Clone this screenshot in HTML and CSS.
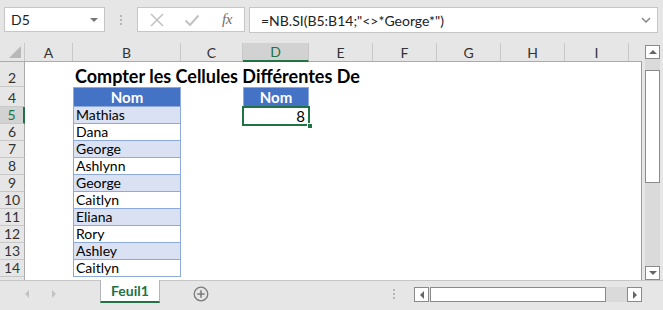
FILE: index.html
```html
<!DOCTYPE html>
<html lang="fr">
<head>
<meta charset="utf-8">
<title>Excel</title>
<link rel="stylesheet" href="styles.css">
</head>
<body>
<div class="app">
  <div class="fbar">
    <div class="namebox"><span>D5</span><i class="caret"></i></div>
    <div class="vdots"><b></b><b></b><b></b></div>
    <div class="fxbox">
      <svg class="ico" width="16" height="16" viewBox="0 0 16 16"><path d="M2 2L14 14M14 2L2 14" stroke="#c3c3c3" stroke-width="1.6" fill="none"/></svg>
      <svg class="ico" width="16" height="16" viewBox="0 0 16 16"><path d="M1.5 8.5L6 13L14.5 3.5" stroke="#c3c3c3" stroke-width="2" fill="none"/></svg>
      <span class="fx">fx</span>
    </div>
    <div class="formula"><span>=NB.SI(B5:B14;"&lt;&gt;*George*")</span>
      <svg class="chev" width="10" height="6" viewBox="0 0 10 6"><path d="M1 1L5 5L9 1" stroke="#888" stroke-width="1.5" fill="none"/></svg>
    </div>
  </div>

  <div class="main">
    <div class="grid">
      <div class="colhdr">
        <div class="corner"><i class="tri"></i></div>
        <div class="ch">A</div><div class="ch">B</div><div class="ch">C</div><div class="ch sel">D</div>
        <div class="ch">E</div><div class="ch">F</div><div class="ch">G</div><div class="ch">H</div><div class="ch">I</div><div class="ch last"></div>
      </div>
      <div class="rows">
        <div class="row r2"><div class="rh">2</div><div class="c"></div><div class="c title">Compter les Cellules Différentes De</div><div class="c"></div><div class="c"></div><div class="c"></div></div>
        <div class="row r4"><div class="rh">4</div><div class="c"></div><div class="c th">Nom</div><div class="c"></div><div class="c th">Nom</div><div class="c"></div></div>
        <div class="row"><div class="rh sel">5</div><div class="c"></div><div class="c td band">Mathias</div><div class="c"></div><div class="c num active">8<i class="handle"></i></div><div class="c"></div></div>
        <div class="row"><div class="rh">6</div><div class="c"></div><div class="c td">Dana</div><div class="c"></div><div class="c"></div><div class="c"></div></div>
        <div class="row"><div class="rh">7</div><div class="c"></div><div class="c td band">George</div><div class="c"></div><div class="c"></div><div class="c"></div></div>
        <div class="row"><div class="rh">8</div><div class="c"></div><div class="c td">Ashlynn</div><div class="c"></div><div class="c"></div><div class="c"></div></div>
        <div class="row"><div class="rh">9</div><div class="c"></div><div class="c td band">George</div><div class="c"></div><div class="c"></div><div class="c"></div></div>
        <div class="row"><div class="rh">10</div><div class="c"></div><div class="c td">Caitlyn</div><div class="c"></div><div class="c"></div><div class="c"></div></div>
        <div class="row"><div class="rh">11</div><div class="c"></div><div class="c td band">Eliana</div><div class="c"></div><div class="c"></div><div class="c"></div></div>
        <div class="row"><div class="rh">12</div><div class="c"></div><div class="c td">Rory</div><div class="c"></div><div class="c"></div><div class="c"></div></div>
        <div class="row"><div class="rh">13</div><div class="c"></div><div class="c td band">Ashley</div><div class="c"></div><div class="c"></div><div class="c"></div></div>
        <div class="row"><div class="rh">14</div><div class="c"></div><div class="c td">Caitlyn</div><div class="c"></div><div class="c"></div><div class="c"></div></div>
        <div class="row rpart"><div class="rh"></div><div class="c"></div><div class="c"></div><div class="c"></div><div class="c"></div><div class="c"></div></div>
      </div>
    </div>
    <div class="vscroll">
      <div class="sbtn"><i class="up"></i></div>
      <div class="vtrack"><div class="vthumb"></div></div>
      <div class="sbtn"><i class="down"></i></div>
    </div>
  </div>

  <div class="tabbar">
    <div class="nav"><i class="navl"></i><i class="navr"></i></div>
    <div class="tab">Feuil1</div>
    <div class="addarea">
      <svg width="16" height="16" viewBox="0 0 16 16"><circle cx="8" cy="8" r="6.8" stroke="#7a7a7a" stroke-width="1.3" fill="none"/><path d="M8 4.3V11.7M4.3 8H11.7" stroke="#7a7a7a" stroke-width="1.5"/></svg>
    </div>
    <div class="spacer"></div>
    <div class="hdots"><b></b><b></b><b></b></div>
    <div class="hscroll">
      <div class="hbtn"><i class="left"></i></div>
      <div class="hthumb"></div>
      <div class="htrack"></div>
      <div class="hbtn"><i class="right"></i></div>
    </div>
  </div>
</div>
</body>
</html>
```

FILE: styles.css
```css
* { box-sizing: border-box; }
html, body { margin: 0; padding: 0; }
body { background: #e6e6e6; }
.app {
  width: 663px; height: 310px; overflow: hidden;
  background: #e6e6e6;
  font-family: Lato, "Liberation Sans", sans-serif;
  color: #000;
}

/* formula bar */
.fbar { display: flex; height: 33px; padding: 7px 5px 0 4px; }
.namebox {
  width: 101px; height: 25px; background: #fff; border: 1px solid #c6c6c6;
  display: flex; align-items: center; justify-content: space-between;
  padding: 0 6px 0 6px; font-size: 14px; color: #222;
}
.caret { width: 0; height: 0; border-left: 4px solid transparent; border-right: 4px solid transparent; border-top: 4px solid #777; }
.vdots { width: 32px; display: flex; flex-direction: column; align-items: center; justify-content: center; gap: 2px; height: 25px; }
.vdots b, .hdots b { display: block; width: 2px; height: 2px; background: #b5b5b5; }
.fxbox {
  width: 108px; height: 25px; background: #fff; border: 1px solid #c6c6c6;
  display: flex; align-items: center; padding-left: 11px;
}
.fxbox .ico { margin-right: 19px; }
.fx { font-family: "Liberation Serif", serif; font-style: italic; font-size: 15px; color: #6e6e6e; letter-spacing: -0.5px; margin-left: 3px; }
.formula {
  margin-left: 4px; width: 409px; height: 26px; background: #fff; border: 1px solid #c6c6c6;
  display: flex; align-items: center; justify-content: space-between;
  padding: 0 6px 0 11px; font-size: 14px; color: #222;
}

/* grid */
.main { display: flex; margin-top: 10px; height: 237px; }
.grid { width: 642px; display: flex; flex-direction: column; }
.colhdr {
  display: grid; height: 19px;
  grid-template-columns: 25px 48px 108px 62px 66px 64px 64px 64px 64px 64px 13px;
  border-bottom: 1px solid #ababab;
}
.corner { position: relative; border-right: 1px solid #c8c8c8; }
.tri {
  position: absolute; right: 3px; bottom: 3px; width: 0; height: 0;
  border-left: 12px solid transparent; border-bottom: 12px solid #b8b8b8;
}
.ch {
  display: flex; align-items: center; justify-content: center;
  font-size: 14px; color: #333; border-right: 1px solid #c8c8c8;
}
.ch.last { border-right: none; }
.ch.sel { background: #d2d2d2; color: #217346; border-bottom: 2px solid #217346; margin-bottom: -1px; }

.rows { flex: 1; background: #fff; border-right: 1px solid #9c9c9c; }
.row { display: grid; grid-template-columns: 25px 48px 108px 62px 66px 1fr; height: 17px; }
.row.r2 { height: 25px; }
.row.r4 { height: 20px; }
.row.rpart { height: 3px; }
.rh {
  background: #e6e6e6; border-right: 1px solid #ababab; border-bottom: 1px solid #c8c8c8;
  display: flex; align-items: flex-end; justify-content: center;
  font-size: 14px; color: #333; line-height: 16px;
}
.rh.sel { background: #d2d2d2; color: #217346; border-right: 2px solid #217346; }
.rpart .rh { border-bottom: none; }
.c { display: flex; align-items: flex-end; font-size: 14px; line-height: 16px; white-space: nowrap; padding: 0 2px; }
.title { font-weight: bold; font-size: 18px; line-height: 22px; overflow: visible; position: relative; z-index: 1; }
.th {
  background: #4472c4; color: #fff; font-weight: bold; justify-content: center;
  border: 1px solid #8ea9db; align-items: center; font-size: 15px;
}
.td { border-left: 1px solid #8ea9db; border-right: 1px solid #8ea9db; border-bottom: 1px solid #8ea9db; }
.band { background: #d9e1f2; }
.num { justify-content: flex-end; padding-right: 4px; font-size: 15px; }
.active { position: relative; }
.active::after {
  content: ""; position: absolute; left: -1px; top: -1px; right: -1px; bottom: -2px;
  border: 2px solid #217346;
}
.handle {
  position: absolute; right: -4px; bottom: -5px; width: 6px; height: 6px;
  background: #217346; border: 1px solid #fff; z-index: 2;
}

/* vertical scrollbar */
.vscroll { width: 21px; padding: 2px 3px 0 3px; display: flex; flex-direction: column; }
.sbtn {
  height: 14px; background: #fff; border: 1px solid #8a8a8a;
  display: flex; align-items: center; justify-content: center;
}
.up { width: 0; height: 0; border-left: 4px solid transparent; border-right: 4px solid transparent; border-bottom: 4px solid #666; }
.down { width: 0; height: 0; border-left: 4px solid transparent; border-right: 4px solid transparent; border-top: 4px solid #666; }
.vtrack { height: 207px; background: #dadada; padding-top: 11px; }
.vthumb { height: 113px; background: #fff; border: 1px solid #8a8a8a; }

/* tab bar */
.tabbar { display: flex; height: 30px; border-top: 1px solid #c6c6c6; }
.nav { width: 100px; display: flex; align-items: center; padding-left: 25px; gap: 23px; padding-bottom: 4px; }
.navl { width: 0; height: 0; border-top: 4px solid transparent; border-bottom: 4px solid transparent; border-right: 4px solid #c2c2c2; }
.navr { width: 0; height: 0; border-top: 4px solid transparent; border-bottom: 4px solid transparent; border-left: 4px solid #c2c2c2; }
.tab {
  width: 60px; height: 23px; margin-top: -1px; background: #fff;
  border-left: 1px solid #b5b5b5; border-right: 1px solid #b5b5b5; border-bottom: 2px solid #217346;
  display: flex; align-items: center; justify-content: center;
  font-weight: bold; font-size: 14px; color: #217346;
}
.addarea { width: 84px; display: flex; align-items: center; padding-left: 33px; padding-bottom: 4px; }
.spacer { flex: 1; }
.hdots { width: 30px; display: flex; flex-direction: column; align-items: flex-start; padding-left: 9px; gap: 2px; padding-top: 8px; }
.hscroll { width: 228px; height: 15px; margin-top: 6px; margin-right: 21px; display: flex; }
.hbtn {
  width: 15px; height: 15px; background: #fff; border: 1px solid #8a8a8a;
  display: flex; align-items: center; justify-content: center;
}
.left { width: 0; height: 0; border-top: 4px solid transparent; border-bottom: 4px solid transparent; border-right: 4px solid #666; }
.right { width: 0; height: 0; border-top: 4px solid transparent; border-bottom: 4px solid transparent; border-left: 4px solid #666; }
.hthumb { width: 176px; height: 15px; margin-left: 1px; background: #fff; border: 1px solid #8a8a8a; }
.htrack { flex: 1; background: #dadada; height: 15px; }
```
